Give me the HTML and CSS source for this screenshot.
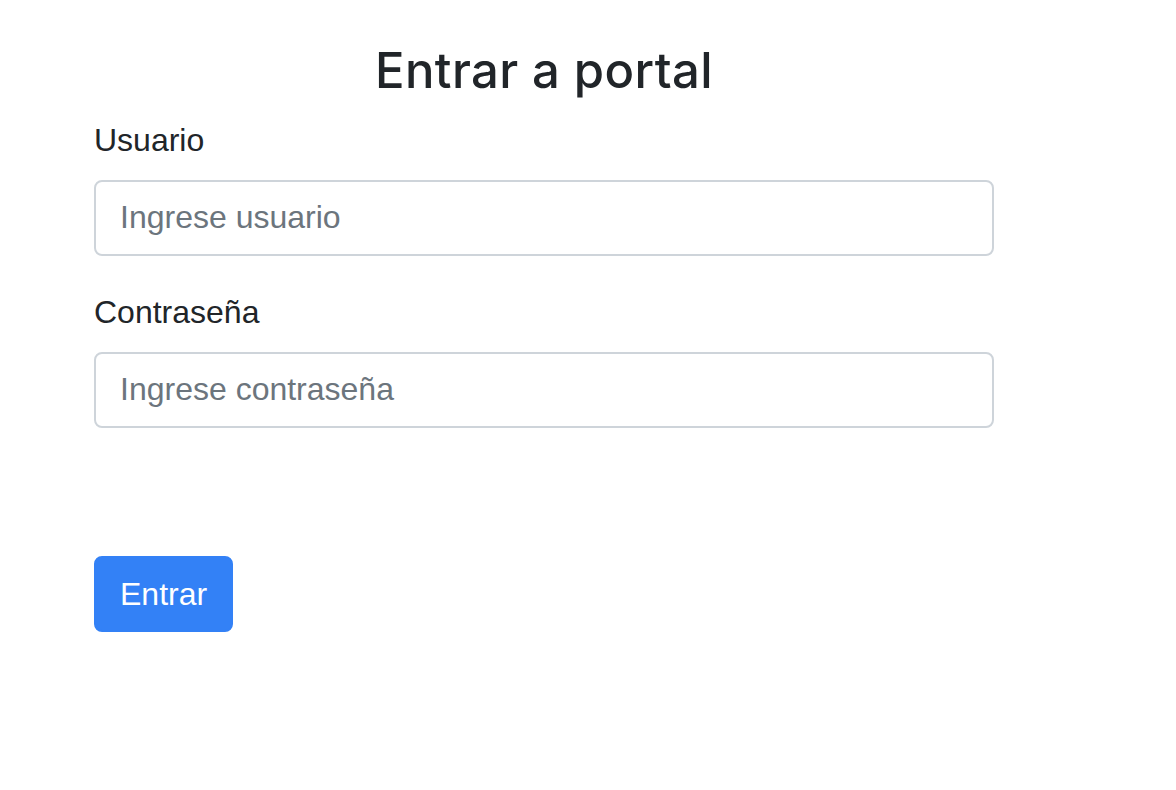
FILE: index.html
```html
<!DOCTYPE html>
<html lang="es">
<head>
<meta charset="utf-8">
<title>Entrar a portal</title>
<link rel="stylesheet" href="styles.css">
</head>
<body>
<main class="wrap">
  <h4 class="title">Entrar a portal</h4>
  <form class="form">
    <div class="group">
      <label class="label" for="u">Usuario</label>
      <input class="input" id="u" type="text" placeholder="Ingrese usuario">
    </div>
    <div class="group">
      <label class="label" for="p">Contraseña</label>
      <input class="input" id="p" type="password" placeholder="Ingrese contraseña">
    </div>
    <button class="btn" type="button">Entrar</button>
  </form>
</main>
</body>
</html>
```
FILE: styles.css
```css
html, body {
  margin: 0;
  padding: 0;
  background: #fff;
}
body {
  font-family: "Liberation Sans", Arial, sans-serif;
  color: #212529;
}
.wrap {
  width: 900px;
  margin-left: 94px;
  padding-top: 42px;
}
.title {
  margin: 0 0 16px;
  font-family: Inter, "Liberation Sans", sans-serif;
  font-size: 49px;
  line-height: 57.6px;
  font-weight: 500;
  text-align: center;
  letter-spacing: 0.4px;
}
.form {
  display: flex;
  flex-direction: column;
  align-items: flex-start;
}
.group {
  align-self: stretch;
  margin-bottom: 32px;
  display: flex;
  flex-direction: column;
}
.label {
  font-size: 32px;
  line-height: 48px;
  margin-bottom: 16px;
}
.input {
  box-sizing: border-box;
  height: 76px;
  width: 100%;
  padding: 12px 24px;
  border: 2px solid #ced4da;
  border-radius: 8px;
  font-family: inherit;
  font-size: 32px;
  line-height: 48px;
  color: #495057;
  background: #fff;
  outline: none;
}
.input::placeholder {
  color: #6c757d;
  opacity: 1;
}
.btn {
  margin-top: 96px;
  box-sizing: border-box;
  height: 76px;
  padding: 12px 24px;
  border: 2px solid #3381f6;
  border-radius: 8px;
  background: #3381f6;
  color: #fff;
  font-family: inherit;
  font-size: 32px;
  line-height: 48px;
  font-weight: 400;
  cursor: pointer;
}
```
